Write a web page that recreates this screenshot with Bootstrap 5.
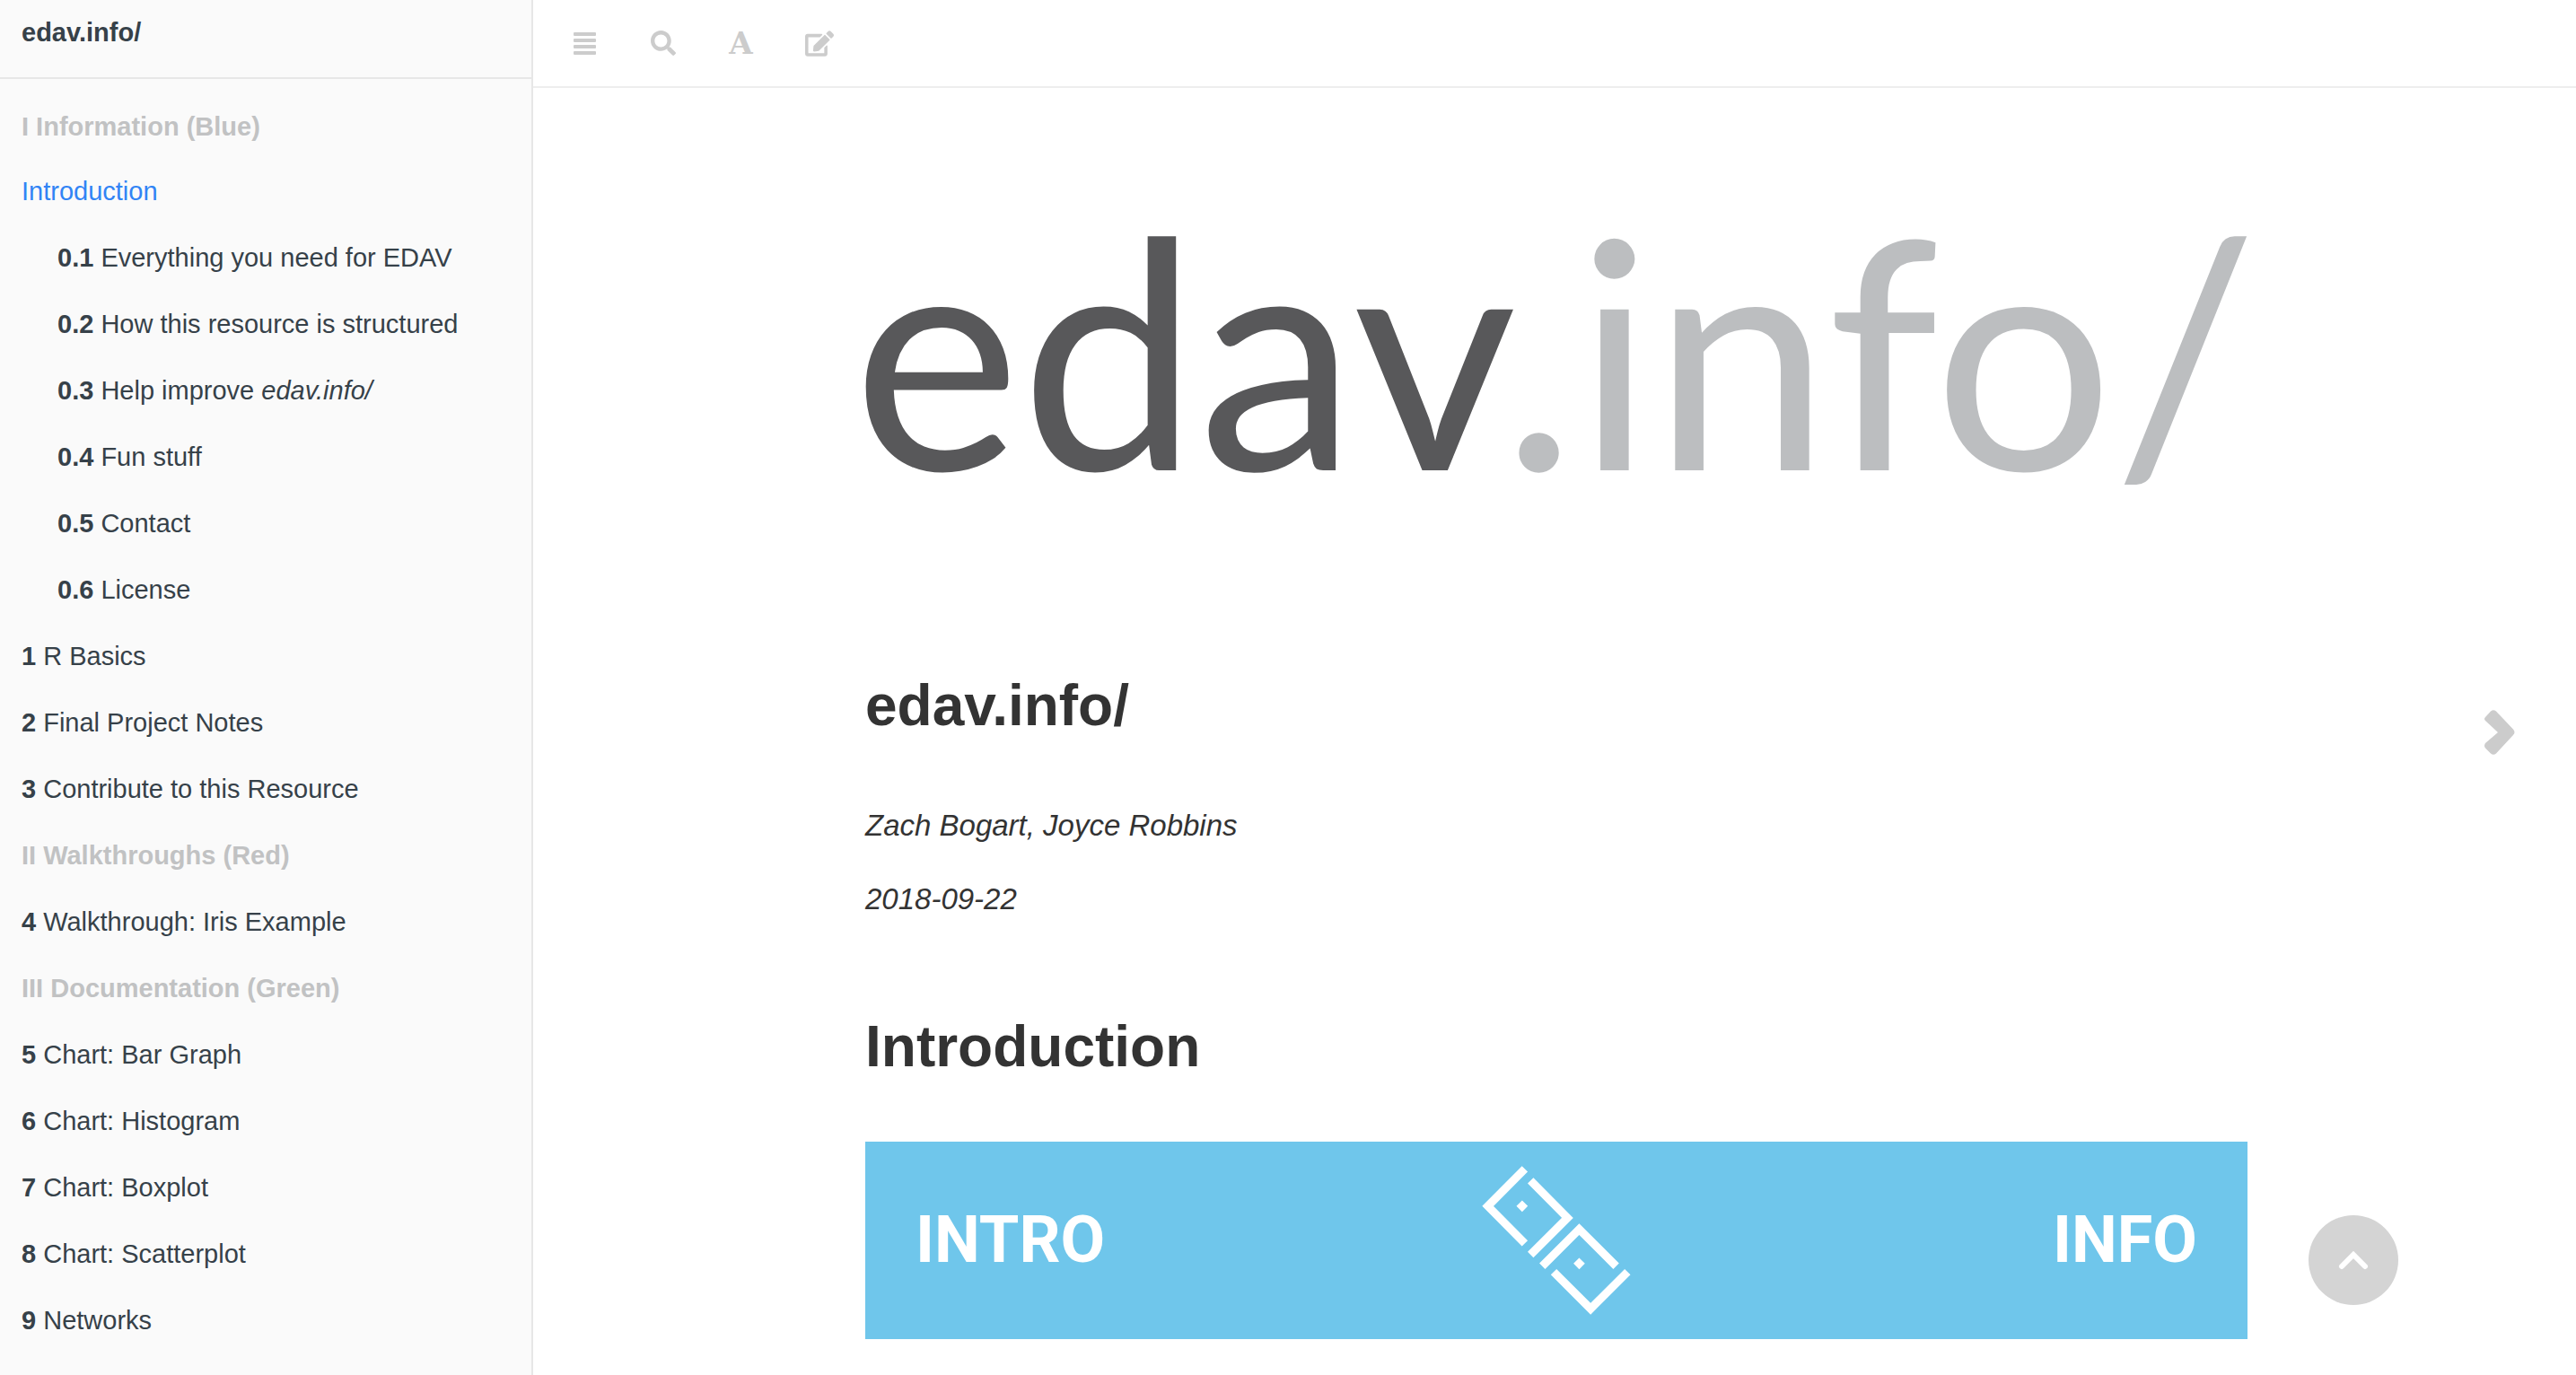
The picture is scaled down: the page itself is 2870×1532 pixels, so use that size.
<!DOCTYPE html>
<html lang="en">
<head>
<meta charset="utf-8">
<meta name="viewport" content="width=device-width, initial-scale=1">
<title>edav.info/</title>
<link href="https://cdn.jsdelivr.net/npm/bootstrap@5.3.0/dist/css/bootstrap.min.css" rel="stylesheet">
<style>
  body { font-family: "Liberation Sans", Arial, sans-serif; color: #333; background: #fff; }
  .toc { width: 594px; background: #fafafa; border-right: 2px solid #e7e7e7; font-size: 29px; line-height: 34px; }
  .toc a { color: #364149; text-decoration: none; padding: 20px 24px; }
  .toc .toc-title { padding: 19px 24px 33px; border-bottom: 2px solid #e7e7e7; }
  .toc-list { padding-top: 16px; }
  .toc .toc-part { color: #c1c2c3; padding: 20px 24px; }
  .toc .toc-part:first-child { padding-bottom: 18px; }
  .toc .toc-sub { padding-left: 64px; }
  .toc .active { color: #3184f5; }
  .toolbar { height: 98px; padding-left: 14px; border-bottom: 2px solid #eee; }
  .toolbar .btn { width: 87px; color: #ccc; border: 0; }
  .font-icon { font: bold 34px/34px "DejaVu Serif", serif; }
  .page-text { max-width: 1540px; font-size: 33px; line-height: 52px; }
  .page-wrap { padding: 158px 0 40px 4px; }
  .page-text h1 { font-size: 64px; line-height: 80px; }
  .page-text .doc-title { margin: 220px 0 68px; }
  .page-text .doc-meta { margin-bottom: 30px; }
  .page-text .doc-intro { margin: 98px 0 66px; }
  .wordmark { font-family: Lato, sans-serif; font-size: 354px; }
  .banner { height: 220px; padding: 0 56px; background: #6fc6eb; color: #fff; font: bold 72px/72px Roboto, sans-serif; }
  .next-page { right: 64px; top: 786px; color: #ccc; }
  .to-top { right: 198px; bottom: 78px; width: 100px; height: 100px; background: #d4d4d4; }
</style>
<script src="https://cdn.jsdelivr.net/npm/bootstrap@5.3.0/dist/js/bootstrap.bundle.min.js"></script>
</head>
<body>
<div class="d-flex vh-100 overflow-hidden">
  <nav class="toc flex-shrink-0 overflow-hidden" aria-label="Contents">
    <a class="toc-title d-block fw-bold" href="#">edav.info/</a>
    <ul class="toc-list list-unstyled mb-0">
      <li class="toc-part fw-bold">I Information (Blue)</li>
      <li><a class="active d-block" href="#">Introduction</a></li>
      <li><a class="toc-sub d-block" href="#"><b>0.1</b> Everything you need for EDAV</a></li>
      <li><a class="toc-sub d-block" href="#"><b>0.2</b> How this resource is structured</a></li>
      <li><a class="toc-sub d-block" href="#"><b>0.3</b> Help improve <em>edav.info/</em></a></li>
      <li><a class="toc-sub d-block" href="#"><b>0.4</b> Fun stuff</a></li>
      <li><a class="toc-sub d-block" href="#"><b>0.5</b> Contact</a></li>
      <li><a class="toc-sub d-block" href="#"><b>0.6</b> License</a></li>
      <li><a class="d-block" href="#"><b>1</b> R Basics</a></li>
      <li><a class="d-block" href="#"><b>2</b> Final Project Notes</a></li>
      <li><a class="d-block" href="#"><b>3</b> Contribute to this Resource</a></li>
      <li class="toc-part fw-bold">II Walkthroughs (Red)</li>
      <li><a class="d-block" href="#"><b>4</b> Walkthrough: Iris Example</a></li>
      <li class="toc-part fw-bold">III Documentation (Green)</li>
      <li><a class="d-block" href="#"><b>5</b> Chart: Bar Graph</a></li>
      <li><a class="d-block" href="#"><b>6</b> Chart: Histogram</a></li>
      <li><a class="d-block" href="#"><b>7</b> Chart: Boxplot</a></li>
      <li><a class="d-block" href="#"><b>8</b> Chart: Scatterplot</a></li>
      <li><a class="d-block" href="#"><b>9</b> Networks</a></li>
    </ul>
  </nav>

  <div class="flex-fill overflow-hidden">
    <header class="toolbar d-flex align-items-center">
      <button class="btn p-0 d-flex justify-content-center" type="button" aria-label="Toggle sidebar">
        <svg width="26" height="26" viewBox="0 0 26 26" fill="currentColor"><rect y="1" width="25" height="4" rx="1"/><rect y="8" width="25" height="4" rx="1"/><rect y="15" width="25" height="4" rx="1"/><rect y="22" width="25" height="4" rx="1"/></svg>
      </button>
      <button class="btn p-0 d-flex justify-content-center" type="button" aria-label="Search">
        <svg width="28" height="28" viewBox="0 0 512 512" fill="currentColor"><path d="M505 442.700L405.300 343c-4.500-4.500-10.600-7-17-7H372c27.600-35.300 44-79.700 44-128C416 93.100 322.900 0 208 0S0 93.100 0 208s93.100 208 208 208c48.300 0 92.700-16.400 128-44v16.300c0 6.400 2.500 12.500 7 17l99.700 99.700c9.400 9.400 24.600 9.400 33.900 0l28.300-28.300c9.400-9.400 9.400-24.600.1-34zM208 336c-70.700 0-128-57.200-128-128 0-70.700 57.200-128 128-128 70.700 0 128 57.200 128 128 0 70.700-57.200 128-128 128z"/></svg>
      </button>
      <button class="btn p-0 font-icon" type="button" aria-label="Font settings">A</button>
      <button class="btn p-0 d-flex justify-content-center" type="button" aria-label="Edit">
        <svg width="32" height="29" viewBox="0 0 576 512" fill="currentColor"><path d="M402.600 83.200l90.200 90.200c3.800 3.800 3.800 10 0 13.800L274.400 405.600l-92.800 10.300c-12.400 1.400-22.900-9.100-21.500-21.500l10.300-92.800L388.800 83.200c3.800-3.800 10-3.800 13.800 0zm162-22.900l-48.800-48.800c-15.200-15.200-39.900-15.200-55.200 0l-35.400 35.400c-3.800 3.800-3.800 10 0 13.800l90.200 90.200c3.800 3.800 10 3.800 13.800 0l35.400-35.400c15.200-15.300 15.200-40 0-55.200zM384 346.200V448H64V128h229.800c3.200 0 6.200-1.300 8.500-3.500l40-40c7.600-7.600 2.200-20.500-8.500-20.500H48C21.500 64 0 85.500 0 112v352c0 26.500 21.500 48 48 48h352c26.500 0 48-21.500 48-48V306.200c0-10.700-12.900-16-20.500-8.500l-40 40c-2.200 2.300-3.500 5.300-3.500 8.500z"/></svg>
      </button>
    </header>

    <main class="page-wrap">
      <article class="page-text mx-auto">
        <svg class="wordmark d-block w-100 overflow-visible" viewBox="0 0 1540 270" role="img" aria-label="edav.info/">
          <text x="-14" y="268" fill="#58585a">edav</text>
          <text x="1551" y="268" text-anchor="end" fill="#bcbec0">.info/</text>
        </svg>
        <h1 class="doc-title fw-bold">edav.info/</h1>
        <p class="doc-meta fst-italic">Zach Bogart, Joyce Robbins</p>
        <p class="doc-meta fst-italic">2018-09-22</p>
        <h1 class="doc-intro fw-bold">Introduction</h1>
        <div class="banner d-flex align-items-center">
          <span class="col text-start">INTRO</span>
          <svg width="166" height="166" viewBox="154 117 496 496" fill="none" stroke="#fff" stroke-width="27" aria-hidden="true">
            <path d="M297 127L174 251L297 375M316 166L439 290L316 413M355 451L478 328L601 451M393 470L516 593L639 470"/>
            <path fill="#fff" stroke="none" d="M288 232l19 19l-19 19l-19-19zM478 423l19 19l-19 19l-19-19z"/>
          </svg>
          <span class="col text-end">INFO</span>
        </div>
      </article>
    </main>
  </div>
</div>

<a class="next-page position-fixed" href="#" aria-label="Next page">
  <svg class="d-block" width="42" height="60" viewBox="0 0 42 60" fill="currentColor"><path d="M5 13L11 6.500Q14 4 17 6.500L36 26.500Q39 30 36 33L17 53.500Q14 56 11 53.500L5 47.500Q3 45 5 42L19 30L5 17Q3 15 5 13Z"/></svg>
</a>
<button class="to-top btn rounded-circle border-0 p-0 position-fixed d-flex align-items-center justify-content-center" type="button" aria-label="Back to top">
  <svg width="34" height="22" viewBox="0 0 34 22" fill="none" stroke="#fff" stroke-width="6" stroke-linecap="round"><path d="M4 18L17 5L30 18"/></svg>
</button>
</body>
</html>
